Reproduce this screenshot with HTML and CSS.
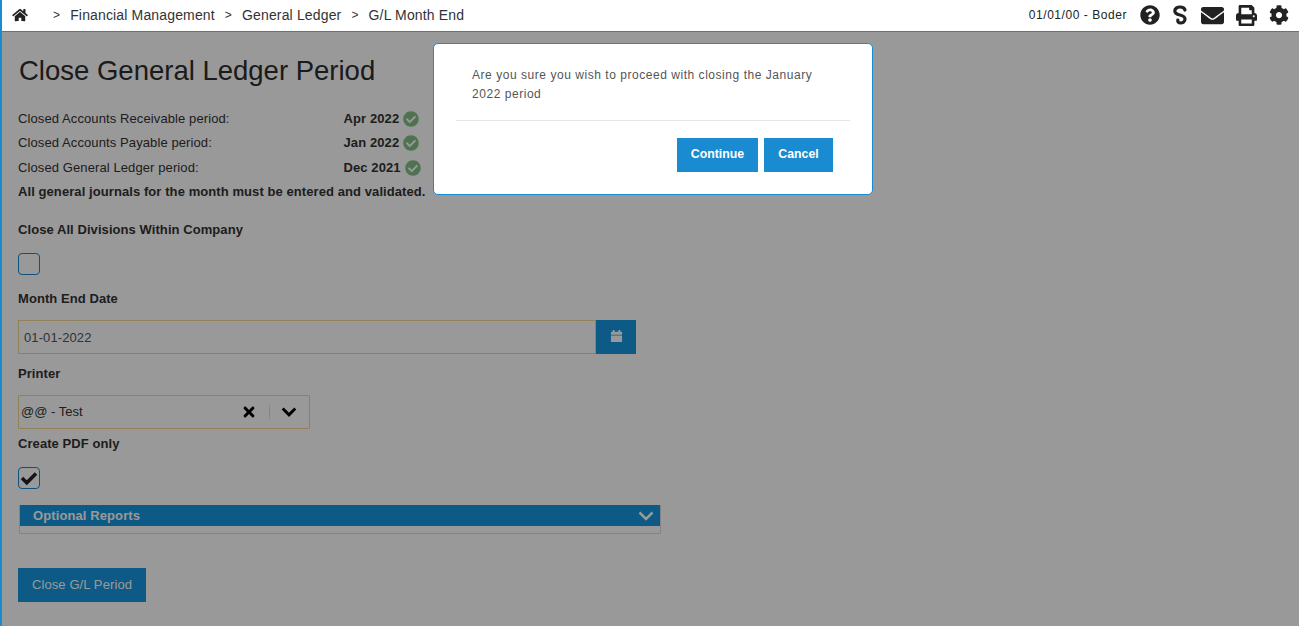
FILE: index.html
```html
<!DOCTYPE html>
<html lang="en">
<head>
<meta charset="utf-8">
<title>Close General Ledger Period</title>
<link rel="stylesheet" href="styles.css">
</head>
<body>
<div class="shell">
  <header class="topbar">
    <nav class="crumbs">
      <svg class="home" viewBox="0 0 576 512"><path d="M280.37 148.26L96 300.11V464a16 16 0 0 0 16 16l112.06-.29a16 16 0 0 0 15.92-16V368a16 16 0 0 1 16-16h64a16 16 0 0 1 16 16v95.64a16 16 0 0 0 16 16.05L464 480a16 16 0 0 0 16-16V300L295.67 148.26a12.19 12.19 0 0 0-15.3 0zM571.6 251.47L488 182.56V44.05a12 12 0 0 0-12-12h-56a12 12 0 0 0-12 12v72.61L318.47 43a48 48 0 0 0-61 0L4.34 251.47a12 12 0 0 0-1.6 16.9l25.5 31A12 12 0 0 0 45.15 301l235.22-193.74a12.19 12.19 0 0 1 15.3 0L530.9 301a12 12 0 0 0 16.9-1.6l25.5-31a12 12 0 0 0-1.7-16.93z"/></svg>
      <span class="sep first">&gt;</span><span>Financial Management</span>
      <span class="sep">&gt;</span><span>General Ledger</span>
      <span class="sep">&gt;</span><span>G/L Month End</span>
    </nav>
    <div class="tools">
      <span class="who">01/01/00 - Boder</span>
      <svg class="tool t-help" viewBox="0 0 512 512"><path d="M504 256c0 136.997-111.043 248-248 248S8 392.997 8 256C8 119.083 119.043 8 256 8s248 111.083 248 248zM262.655 90c-54.497 0-89.255 22.957-116.549 63.758-3.536 5.286-2.353 12.415 2.715 16.258l34.699 26.31c5.205 3.947 12.621 3.008 16.665-2.122 17.864-22.658 30.113-35.797 57.303-35.797 20.429 0 45.698 13.148 45.698 32.958 0 14.976-12.363 22.667-32.534 33.976C247.128 238.528 216 254.941 216 296v4c0 6.627 5.373 12 12 12h56c6.627 0 12-5.373 12-12v-1.333c0-28.462 83.186-29.647 83.186-106.667 0-58.002-60.165-102-116.531-102zM256 338c-25.365 0-46 20.635-46 46 0 25.364 20.635 46 46 46s46-20.636 46-46c0-25.365-20.635-46-46-46z"/></svg>
      <svg class="tool t-s" viewBox="0 0 16 20"><path class="s-stroke" d="M13 5C12.500 3 10.500 2 8 2 5 2 2.800 3.600 2.800 6 2.800 8.600 5.500 9.400 8 10 10.500 10.600 13 11.500 13 14 13 16.500 11 18 8.500 18 6.500 18 5.500 16.800 5.800 15"/></svg>
      <svg class="tool t-mail" viewBox="0 0 512 512"><path d="M502.3 190.8c3.9-3.1 9.7-.2 9.7 4.7V400c0 26.5-21.5 48-48 48H48c-26.5 0-48-21.5-48-48V195.6c0-5 5.7-7.8 9.7-4.7 22.4 17.4 52.1 39.500 154.100 113.600 21.100 15.400 56.700 47.800 92.200 47.600 35.700.3 72-32.800 92.300-47.600 102-74.100 131.600-96.300 154-113.700zM256 320c23.200.4 56.600-29.200 73.400-41.400 132.700-96.300 142.800-104.700 173.400-128.700 5.800-4.500 9.200-11.500 9.200-18.900v-19c0-26.500-21.500-48-48-48H48C21.500 64 0 85.500 0 112v19c0 7.400 3.400 14.300 9.200 18.900 30.600 23.900 40.700 32.400 173.400 128.700 16.800 12.200 50.200 41.800 73.400 41.400z"/></svg>
      <svg class="tool t-print" viewBox="0 0 512 512"><path d="M448 192V77.250c0-8.490-3.370-16.620-9.370-22.630L393.370 9.370c-6-6-14.140-9.370-22.630-9.370H96C78.330 0 64 14.33 64 32v160c-35.350 0-64 28.650-64 64v112c0 8.840 7.160 16 16 16h48v96c0 17.670 14.330 32 32 32h320c17.670 0 32-14.330 32-32v-96h48c8.840 0 16-7.160 16-16V256c0-35.350-28.650-64-64-64zm-64 256H128v-96h256v96zm0-224H128V64h192v48c0 8.840 7.160 16 16 16h48v96zm48 72c-13.250 0-24-10.750-24-24 0-13.260 10.750-24 24-24s24 10.740 24 24c0 13.250-10.750 24-24 24z"/></svg>
      <svg class="tool t-cog" viewBox="0 0 512 512"><path d="M487.400 315.700l-42.600-24.600c4.300-23.200 4.300-47 0-70.200l42.600-24.600c4.900-2.800 7.100-8.600 5.500-14-11.100-35.600-30-67.800-54.700-94.600-3.800-4.100-10-5.100-14.800-2.300L380.800 110c-17.900-15.400-38.500-27.300-60.800-35.100V25.800c0-5.600-3.900-10.500-9.400-11.700-36.700-8.200-74.300-7.800-109.200 0-5.500 1.200-9.400 6.100-9.400 11.700V75c-22.200 7.900-42.800 19.800-60.800 35.100L88.700 85.500c-4.900-2.800-11-1.900-14.800 2.300-24.700 26.700-43.600 58.900-54.700 94.600-1.700 5.400.6 11.200 5.500 14L67.300 221c-4.300 23.200-4.300 47 0 70.200l-42.600 24.600c-4.900 2.800-7.100 8.600-5.500 14 11.100 35.600 30 67.800 54.700 94.600 3.800 4.100 10 5.100 14.800 2.300l42.600-24.600c17.900 15.400 38.500 27.300 60.800 35.100v49.200c0 5.600 3.900 10.500 9.400 11.700 36.700 8.200 74.300 7.800 109.200 0 5.500-1.200 9.400-6.100 9.400-11.700v-49.200c22.200-7.900 42.800-19.800 60.800-35.100l42.600 24.600c4.900 2.800 11 1.900 14.800-2.300 24.700-26.700 43.600-58.900 54.700-94.600 1.500-5.500-.7-11.300-5.600-14.100zM256 336c-44.100 0-80-35.900-80-80s35.900-80 80-80 80 35.900 80 80-35.900 80-80 80z"/></svg>
    </div>
  </header>

  <main class="content">
    <h1 class="title">Close General Ledger Period</h1>

    <div class="status-row">
      <span class="status-label">Closed Accounts Receivable period:</span>
      <strong class="status-value">Apr 2022</strong>
      <svg class="ok" viewBox="0 0 512 512"><path d="M504 256c0 136.967-111.033 248-248 248S8 392.967 8 256 119.033 8 256 8s248 111.033 248 248zM227.314 387.314l184-184c6.248-6.248 6.248-16.379 0-22.627l-22.627-22.627c-6.248-6.249-16.379-6.249-22.628 0L216 308.118l-70.059-70.059c-6.248-6.248-16.379-6.248-22.628 0l-22.627 22.627c-6.248 6.248-6.248 16.379 0 22.627l104 104c6.249 6.249 16.379 6.249 22.628.001z"/></svg>
    </div>
    <div class="status-row">
      <span class="status-label">Closed Accounts Payable period:</span>
      <strong class="status-value">Jan 2022</strong>
      <svg class="ok" viewBox="0 0 512 512"><path d="M504 256c0 136.967-111.033 248-248 248S8 392.967 8 256 119.033 8 256 8s248 111.033 248 248zM227.314 387.314l184-184c6.248-6.248 6.248-16.379 0-22.627l-22.627-22.627c-6.248-6.249-16.379-6.249-22.628 0L216 308.118l-70.059-70.059c-6.248-6.248-16.379-6.248-22.628 0l-22.627 22.627c-6.248 6.248-6.248 16.379 0 22.627l104 104c6.249 6.249 16.379 6.249 22.628.001z"/></svg>
    </div>
    <div class="status-row">
      <span class="status-label">Closed General Ledger period:</span>
      <strong class="status-value">Dec 2021</strong>
      <svg class="ok" viewBox="0 0 512 512"><path d="M504 256c0 136.967-111.033 248-248 248S8 392.967 8 256 119.033 8 256 8s248 111.033 248 248zM227.314 387.314l184-184c6.248-6.248 6.248-16.379 0-22.627l-22.627-22.627c-6.248-6.249-16.379-6.249-22.628 0L216 308.118l-70.059-70.059c-6.248-6.248-16.379-6.248-22.628 0l-22.627 22.627c-6.248 6.248-6.248 16.379 0 22.627l104 104c6.249 6.249 16.379 6.249 22.628.001z"/></svg>
    </div>
    <p class="notice">All general journals for the month must be entered and validated.</p>

    <div class="field-label gap-divisions">Close All Divisions Within Company</div>
    <div class="checkbox gap-box"></div>

    <div class="field-label gap-date">Month End Date</div>
    <div class="date-group">
      <div class="date-input">01-01-2022</div>
      <div class="date-btn">
        <svg class="cal" viewBox="0 0 14 14"><path d="M3 0h2v2H3zM9 0h2v2H9zM1 2h12v3H1zM1 6h12v7H1z"/></svg>
      </div>
    </div>

    <div class="field-label gap-printer">Printer</div>
    <div class="select">
      <span class="select-value">@@ - Test</span>
      <svg class="clear" viewBox="0 0 352 512"><path d="M242.720 256l100.070-100.070c12.280-12.280 12.280-32.190 0-44.480l-22.240-22.240c-12.280-12.280-32.190-12.280-44.480 0L176 189.280 75.930 89.210c-12.280-12.280-32.190-12.280-44.480 0L9.210 111.450c-12.280 12.280-12.280 32.190 0 44.480L109.280 256 9.210 356.070c-12.280 12.280-12.280 32.190 0 44.480l22.240 22.240c12.280 12.280 32.200 12.280 44.480 0L176 322.720l100.070 100.070c12.280 12.280 32.200 12.280 44.480 0l22.240-22.240c12.280-12.280 12.280-32.190 0-44.480L242.720 256z"/></svg>
      <span class="select-div"></span>
      <svg class="caret" viewBox="0 0 14 10"><path d="M1.500 2l5.500 5.500L12.500 2"/></svg>
    </div>

    <div class="field-label gap-pdf">Create PDF only</div>
    <div class="checkbox gap-box">
      <svg class="tick" viewBox="0 0 18 14"><path d="M2 7l4.800 4.800L16 2.500"/></svg>
    </div>

    <section class="panel">
      <div class="panel-head">
        <span>Optional Reports</span>
        <svg class="panel-caret" viewBox="0 0 16 10"><path d="M1.500 1.500L8 8l6.500-6.500"/></svg>
      </div>
    </section>

    <button class="primary close-btn" type="button">Close G/L Period</button>

    <div class="overlay"></div>
  </main>

  <div class="modal" role="dialog">
    <p class="modal-text">Are you sure you wish to proceed with closing the January 2022 period</p>
    <hr class="modal-rule">
    <div class="modal-actions">
      <button class="modal-btn btn-continue" type="button">Continue</button>
      <button class="modal-btn btn-cancel" type="button">Cancel</button>
    </div>
  </div>
</div>
</body>
</html>
```

FILE: styles.css
```css
* { box-sizing: border-box; }
html, body { margin: 0; height: 100%; overflow: hidden; }
body {
  font-family: "Liberation Sans", Arial, sans-serif;
  font-size: 13px;
  color: #333;
  background: #fff;
}
.shell {
  position: relative;
  height: 626px;
  border-left: 2px solid #1a8bd0;
  display: flex;
  flex-direction: column;
}
.topbar {
  height: 32px;
  flex: none;
  display: flex;
  align-items: center;
  justify-content: space-between;
  border-bottom: 1px solid #1a8bd0;
  background: #fff;
  color: #333;
  padding-bottom: 1px;
}
.crumbs { display: flex; align-items: center; padding-left: 10px; font-size: 14px; letter-spacing: .15px; }
.home { width: 16px; height: 14px; fill: #222; margin-right: 10px; }
.sep { margin: 0 10px; font-size: 12px; }
.sep.first { margin-left: 15px; }
.tools { display: flex; align-items: center; padding-right: 10px; }
.who { font-size: 12px; letter-spacing: .55px; color: #222; margin-right: 13px; }
.tool { display: block; fill: #222; }
.t-help { width: 20px; height: 20px; margin-right: 12px; }
.t-s { width: 16px; height: 20px; margin-right: 13px; }
.s-stroke { fill: none; stroke: #222; stroke-width: 3.200; stroke-linecap: round; }
.t-mail { width: 23px; height: 23px; margin-right: 12px; }
.t-print { width: 21px; height: 21px; margin-right: 12px; }
.t-cog { width: 20px; height: 20px; }

.content { position: relative; flex: 1; padding: 0 16px; background: #fff; }
.overlay { position: absolute; inset: 0; background: rgba(0, 0, 0, .4); }
.title { margin: 21px 0 0 1px; font-size: 27.500px; line-height: 36px; font-weight: 400; color: #2e2e2e; }

.status-row { display: flex; align-items: center; height: 24.500px; }
.title + .status-row { margin-top: 17px; }
.status-label { width: 325.500px; letter-spacing: .1px; }
.status-value { font-weight: 700; margin-right: 4px; letter-spacing: .1px; }
.ok { width: 16px; height: 16px; fill: #84c085; margin-top: 1px; }
.notice { margin: 0; font-weight: 700; line-height: 24px; letter-spacing: .08px; }

.field-label { font-weight: 700; line-height: 22px; letter-spacing: .07px; }
.gap-divisions { margin-top: 15.100px; }
.gap-box { margin-top: 12px; }
.gap-date { margin-top: 13px; }
.gap-printer { margin-top: 9px; }
.gap-pdf { margin-top: 4px; }

.checkbox {
  width: 22px; height: 22px;
  border: 1px solid #1a8bd0;
  border-radius: 4px;
  background: #fff;
  display: flex; align-items: center; justify-content: center;
}
.tick { width: 18px; height: 14px; fill: none; stroke: #222; stroke-width: 3.500; }

.date-group { display: flex; margin-top: 10px; height: 34px; width: 618px; }
.date-input {
  flex: 1;
  border: 1px solid #f5d796;
  background: #fff;
  color: #555;
  padding-left: 5px;
  line-height: 34px;
  letter-spacing: .1px;
}
.date-btn { width: 40px; background: #1496de; display: flex; align-items: center; justify-content: center; }
.cal { width: 13px; height: 13px; fill: #fff; }

.select {
  display: flex; align-items: center;
  margin-top: 10px;
  width: 292px; height: 34px;
  border: 1px solid #f5d796;
  background: #fff;
}
.select-value { flex: 1; padding: 0 0 1px 2px; }
.clear { width: 12px; height: 16px; fill: #000; margin-right: 14px; }
.select-div { width: 1px; height: 14px; background: #ddd; margin-right: 11px; }
.caret { width: 16px; height: 12px; margin-right: 12px; fill: none; stroke: #000; stroke-width: 2.500; }

.panel {
  width: 642px; height: 29px;
  margin: 16px 0 0 1px;
  border: 1px solid #ddd;
  border-top: 0;
}
.panel-head {
  height: 21px;
  margin: 0;
  display: flex; align-items: center; justify-content: space-between;
  background: #1496de;
  color: #fff;
  font-weight: 700;
  padding: 1px 6px 0 13px;
  letter-spacing: .1px;
}
.panel-caret { width: 16px; height: 10px; fill: none; stroke: #fff; stroke-width: 2.500; }

.primary {
  display: block;
  border: 0;
  background: #1496de;
  color: #fff;
  font: 13px "Liberation Sans", Arial, sans-serif;
  padding: 0 0 1px;
}
.close-btn { margin-top: 34px; width: 128px; height: 34px; letter-spacing: .1px; }

.modal {
  position: absolute;
  left: 431px; top: 43px;
  width: 440px; height: 152px;
  background: #fff;
  border: 1px solid #1a8bd0;
  border-radius: 5px;
  padding: 22px 22px 0;
}
.modal-text { margin: 0 16px; font-size: 12px; line-height: 19px; letter-spacing: .54px; color: #555; }
.modal-rule { margin: 16px 0 0; border: 0; border-top: 1px solid #e5e5e5; }
.modal-actions { display: flex; justify-content: flex-end; gap: 6px; margin-top: 17px; padding-right: 17px; }
.modal-btn {
  height: 34px; border: 0;
  background: #1a8bd0; color: #fff;
  font: 700 12.300px "Liberation Sans", Arial, sans-serif;
  padding: 0 0 3px;
}
.btn-continue { width: 81px; }
.btn-cancel { width: 69px; }
```
